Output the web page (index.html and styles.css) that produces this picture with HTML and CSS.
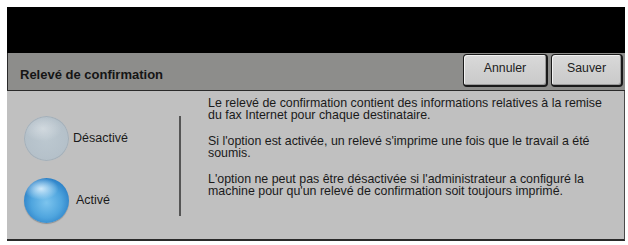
FILE: index.html
```html
<!DOCTYPE html>
<html lang="fr">
<head>
<meta charset="utf-8">
<link rel="stylesheet" href="styles.css">
</head>
<body>
<div class="panel">
  <div class="top"></div>
  <div class="header">
    <div class="title">Relevé de confirmation</div>
    <div class="actions">
      <button class="btn btn-cancel">Annuler</button>
      <button class="btn btn-save">Sauver</button>
    </div>
  </div>
  <div class="content">
    <div class="options">
      <div class="option">
        <span class="radio radio-off"></span>
        <span class="label">Désactivé</span>
      </div>
      <div class="option">
        <span class="radio radio-on"></span>
        <span class="label">Activé</span>
      </div>
    </div>
    <div class="divider"></div>
    <div class="text">
      <p>Le relevé de confirmation contient des informations relatives à la remise du fax Internet pour chaque destinataire.</p>
      <p>Si l'option est activée, un relevé s'imprime une fois que le travail a été soumis.</p>
      <p>L'option ne peut pas être désactivée si l'administrateur a configuré la machine pour qu'un relevé de confirmation soit toujours imprimé.</p>
    </div>
  </div>
</div>
</body>
</html>
```
FILE: styles.css
```css
html, body {
  margin: 0;
  padding: 0;
  background: #ffffff;
}
body {
  font-family: "Liberation Sans", Arial, sans-serif;
  color: #1a1a1a;
}
.panel {
  margin: 7px 0 0 7px;
  width: 618px;
}
.top {
  height: 46px;
  background: #000;
}
.header {
  height: 38px;
  box-sizing: border-box;
  background: #8d8d8b;
  border-left: 1px solid #2a2a2a;
  border-bottom: 1px solid #2a2a2a;
  display: flex;
  align-items: flex-start;
  justify-content: space-between;
}
.title {
  font-weight: bold;
  font-size: 13px;
  color: #151515;
  padding-left: 12px;
  margin-top: 14px;
}
.actions {
  display: flex;
  gap: 3px;
  padding-top: 1px;
  padding-right: 2px;
}
.btn {
  font-family: "Liberation Sans", Arial, sans-serif;
  font-size: 12.3px;
  color: #202020;
  height: 33px;
  box-sizing: border-box;
  background: linear-gradient(#d9d9d9, #c9c9c9);
  border: 1px solid #1a1a1a;
  border-right-width: 2px;
  border-bottom-width: 2px;
  border-radius: 4px;
  box-shadow: inset 1px 1px 0 #f2f2f2, inset -1px -1px 0 #9a9a9a;
  padding: 0 0 5px 0;
}
.btn-cancel { width: 85px; }
.btn-save { width: 72px; }
.content {
  height: 150px;
  box-sizing: border-box;
  background: #c0c0c0;
  border-right: 1px solid #4a4a4a;
  border-bottom: 2px solid #2a2a2a;
  display: flex;
}
.options {
  width: 172px;
  padding: 25px 0 0 17px;
  box-sizing: border-box;
  display: flex;
  flex-direction: column;
  gap: 17px;
}
.option {
  display: flex;
  align-items: center;
  gap: 4px;
}
.radio {
  width: 45px;
  height: 45px;
  border-radius: 50%;
  display: block;
  flex: none;
}
.radio-off {
  background:
    radial-gradient(ellipse 60% 40% at 42% 28%, rgba(255,255,255,0.35), rgba(255,255,255,0) 70%),
    radial-gradient(circle at 50% 50%, #bcc8d0 0%, #b4c0c9 70%, #a8b3bb 100%);
  box-shadow: inset 0 0 0 1px rgba(150,160,170,0.5);
}
.radio-on {
  background:
    radial-gradient(ellipse 55% 35% at 38% 24%, rgba(230,245,255,0.85), rgba(230,245,255,0) 70%),
    radial-gradient(circle at 50% 55%, #7cc4ee 0%, #4fa5de 45%, #2a7fc6 75%, #175e9e 100%);
  box-shadow: 0 1px 1px rgba(0,0,0,0.25);
}
.label {
  font-size: 12.5px;
  color: #1a1a1a;
  margin-top: -2px;
}
.options .option:last-child .label {
  margin-left: 3px;
}
.divider {
  width: 2px;
  height: 100px;
  margin-top: 25px;
  background: #555;
  flex: none;
}
.text {
  padding: 6px 0 0 27px;
  font-size: 12.4px;
  line-height: 12px;
  color: #1a1a1a;
  width: 399px;
}
.text p {
  margin: 0 0 14px 0;
}
```
